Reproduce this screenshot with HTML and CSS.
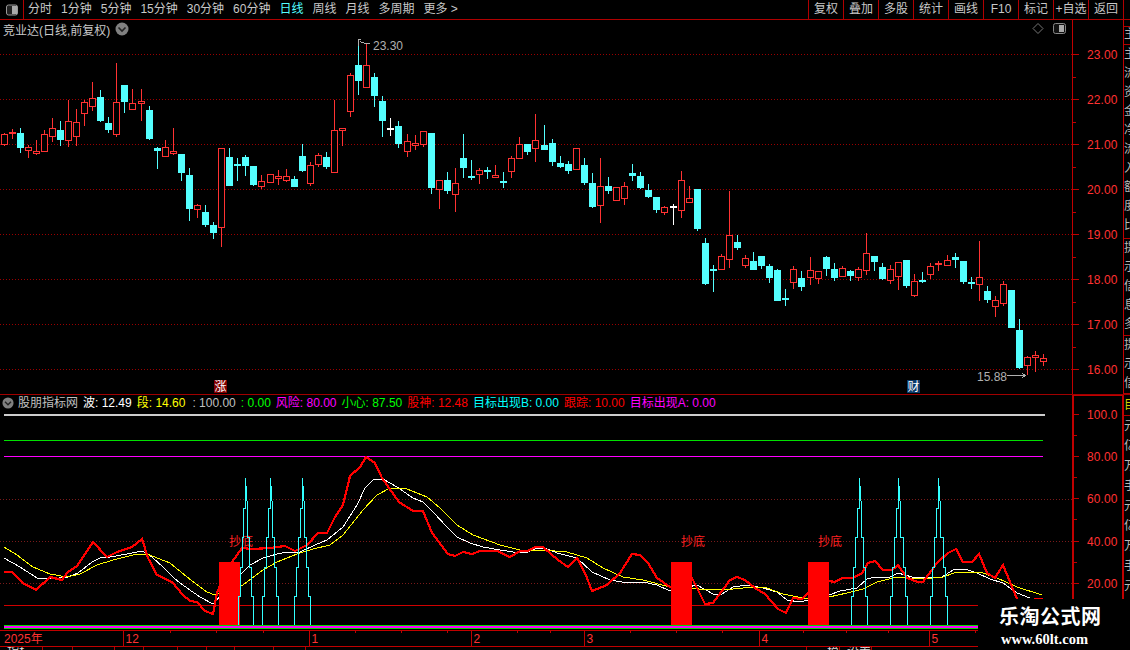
FILE: index.html
```html
<!DOCTYPE html>
<html lang="zh-CN">
<head>
    <meta charset="UTF-8">
    <title>竞业达 日线</title>
    <link rel="stylesheet" href="styles.css">
</head>
<body>
    <!-- Top toolbar -->
    <div class="toolbar">
        <div class="toggle-btn">
            <svg width="14" height="12" viewBox="0 0 14 12"><rect x="1.5" y="1" width="11" height="10" rx="2" fill="#222" stroke="#999"/><rect x="7" y="2" width="5" height="8" fill="#aaa"/></svg>
        </div>
        <div class="periods">
            <span>分时</span><span>1分钟</span><span>5分钟</span><span>15分钟</span><span>30分钟</span><span>60分钟</span>
            <span class="active">日线</span><span>周线</span><span>月线</span><span>多周期</span><span>更多 &gt;</span>
        </div>
        <div class="actions">
            <span>复权</span><span>叠加</span><span>多股</span><span>统计</span><span>画线</span><span>F10</span><span>标记</span><span>+自选</span><span>返回</span>
        </div>
    </div>

    <!-- K line chart -->
    <div class="chart-row kline-row">
        <div class="pane">
            <div class="pane-title">
                <span>竞业达(日线,前复权)</span>
                <svg class="chevron" width="14" height="14" viewBox="0 0 14 14"><circle cx="7" cy="7" r="6.5" fill="#808080"/><path d="M3.5 5.5 L7 9 L10.5 5.5" fill="none" stroke="#222" stroke-width="1.6"/></svg>
                <svg class="title-icons" width="38" height="14" viewBox="0 0 38 14"><path d="M6 1.5 L11 6.5 L6 11.5 L1 6.5 Z" fill="none" stroke="#777"/><rect x="21.5" y="1.5" width="12" height="10" rx="2" fill="#111" stroke="#888"/><rect x="27" y="3" width="5" height="7" fill="#aaa"/></svg>
            </div>
            <svg id="klineChart" class="plot" width="1072" height="356" viewBox="0 38 1072 356"></svg>
        </div>
        <svg id="priceAxis" class="axis" width="50" height="374" viewBox="1073 20 50 374"></svg>
        <div class="side-strip">
            <div class="side-cell cell-a"></div>
            <div class="side-cell cell-b">主</div>
            <div class="side-cell cell-c">主<br>流<br>资<br>金<br>净<br>流<br>入<br>额<br>度<br>比</div>
            <div class="side-cell cell-d">提<br>示<br>信<br>息<br>多</div>
            <div class="side-cell cell-e">提<br>示<br>信</div>
        </div>
    </div>

    <!-- Indicator panel -->
    <div class="chart-row ind-row">
        <div class="pane">
            <div class="ind-legend">
                <svg class="chevron" width="12" height="12" viewBox="0 0 14 14"><circle cx="7" cy="7" r="6.5" fill="#808080"/><path d="M3.5 5.5 L7 9 L10.5 5.5" fill="none" stroke="#222" stroke-width="1.6"/></svg>
                <span class="grey">股朋指标网</span>
                <span class="white">波: 12.49</span>
                <span class="yellow">段: 14.60</span>
                <span class="grey wide">: 100.00</span>
                <span class="green">: 0.00</span>
                <span class="magenta">风险: 80.00</span>
                <span class="green">小心: 87.50</span>
                <span class="red">股神: 12.48</span>
                <span class="cyan">目标出现B: 0.00</span>
                <span class="red">跟踪: 10.00</span>
                <span class="magenta">目标出现A: 0.00</span>
            </div>
            <svg id="indChart" class="plot" width="1072" height="219" viewBox="0 411 1072 219"></svg>
        </div>
        <svg id="indAxis" class="axis" width="48" height="234" viewBox="1074 396 48 234"></svg>
        <div class="side-strip">
            <div class="side-cell cell-f">目</div>
            <div class="side-cell cell-g">元<br>亿<br>万<br>手<br>元<br>亿<br>万<br>手<br>元<br>亿</div>
        </div>
    </div>

    <!-- Date axis -->
    <svg id="dateAxis" class="date-axis" width="1130" height="17" viewBox="0 630 1130 17"></svg>

    <!-- Bottom tabs, nearly cut off by the window -->
    <div class="tabs">
        <span class="tab w43">指标</span><span class="tab w30"></span><span class="tab w42"></span><span class="tab w29"></span>
        <span class="tab w34"></span><span class="tab w29"></span><span class="tab w28"></span><span class="tab w39"></span>
        <span class="tab w32"></span><span class="tab w501"></span><span class="tab w33">模</span><span class="tab w32">设置</span>
    </div>

    <!-- Site watermark -->
    <div class="watermark">
        <div class="wm-name">乐淘公式网</div>
        <div class="wm-url">www.60lt.com</div>
    </div>

    <script src="app.js"></script>
</body>
</html>
```

FILE: styles.css
```css
* {
    margin: 0;
    padding: 0;
    box-sizing: border-box;
}

body {
    position: relative;
    width: 1130px;
    height: 650px;
    overflow: hidden;
    background-color: #000;
    color: #c8c8c8;
    font-family: "Liberation Sans", "Noto Sans CJK SC", sans-serif;
    font-size: 12px;
}

svg {
    display: block;
}

/* Toolbar */
.toolbar {
    display: flex;
    height: 20px;
    border-bottom: 1px solid #b00000;
    line-height: 19px;
}

.toggle-btn {
    display: flex;
    align-items: center;
    justify-content: center;
    width: 24px;
    border-right: 1px solid #b00000;
}

.periods {
    display: flex;
    gap: 9px;
    padding-left: 4px;
}

.periods .active {
    color: #54ffff;
}

.actions {
    display: flex;
    margin-left: auto;
    margin-right: 6px;
    border-right: 1px solid #b00000;
}

.actions span {
    width: 35px;
    border-left: 1px solid #b00000;
    text-align: center;
}

/* Chart rows */
.chart-row {
    display: flex;
}

.kline-row {
    height: 375px;
    border-bottom: 1px solid #a00000;
}

.ind-row {
    height: 235px;
}

.pane {
    width: 1072px;
}

.pane-title {
    display: flex;
    align-items: center;
    height: 18px;
    padding-left: 3px;
}

.pane-title .chevron {
    margin-left: 5px;
}

.title-icons {
    margin-left: auto;
    margin-right: 2px;
}

.axis {
    border-right: 1px solid #c00000;
}

.kline-row .axis {
    width: 52px;
    border-left: 1px solid #c00000;
}

.ind-row .axis {
    width: 52px;
    border-left: 2px solid #c00000;
    border-right: 2px solid #c00000;
    border-top: 1px solid #c00000;
}

.side-strip {
    width: 6px;
    overflow: hidden;
    line-height: 14px;
    color: #b8b8b8;
}

.side-cell {
    width: 14px;
    overflow: hidden;
    border-bottom: 1px solid #b00000;
}

.cell-a { height: 7px; }
.cell-b { height: 18px; }
.cell-c { height: 194px; line-height: 19px; }
.cell-d { height: 97px; line-height: 19px; }
.cell-e { height: 58px; line-height: 19px; }
.cell-f { height: 21px; padding-top: 3px; color: #d0d000; }
.cell-g { height: 214px; line-height: 20px; border-bottom: none; }

.ind-legend {
    display: flex;
    align-items: center;
    gap: 5px;
    height: 16px;
    padding-left: 2px;
    white-space: nowrap;
}

.ind-legend span {
    line-height: 16px;
}

.ind-legend .chevron {
    margin-right: -1px;
}

.ind-legend .wide {
    margin-left: 2px;
}

.grey { color: #c0c0c0; }
.white { color: #fff; }
.yellow { color: #ffff00; }
.green { color: #00ff00; }
.magenta { color: #ff00ff; }
.red { color: #ff0000; }
.cyan { color: #00ffff; }

/* SVG pieces */
.grid {
    stroke: #9a0000;
    stroke-dasharray: 1 2;
    shape-rendering: crispEdges;
}

.grid-dim {
    stroke: #7a1a1a;
}

.candle {
    shape-rendering: crispEdges;
}

.price-label {
    fill: #ff3232;
    font-size: 12px;
    letter-spacing: 0.1px;
}

.tick {
    stroke: #c00000;
    shape-rendering: crispEdges;
}

.note {
    fill: #b0b0b0;
    font-size: 12px;
}

.note-line {
    fill: none;
    stroke: #b0b0b0;
    shape-rendering: crispEdges;
}

.badge-text {
    fill: #fff;
    font-size: 12px;
    text-anchor: middle;
}

.signal-text {
    fill: #ff2020;
    font-size: 12px;
}

.curve {
    fill: none;
    shape-rendering: crispEdges;
}

.date-label {
    fill: #ff3232;
    font-size: 12px;
}

.tabs {
    display: flex;
    height: 3px;
    overflow: hidden;
    line-height: 11px;
    color: #ddd;
}

.tab {
    flex: none;
    height: 3px;
    overflow: visible;
    border-right: 1px solid #b00000;
    padding-left: 7px;
}

.w43 { width: 43px; }
.w30 { width: 30px; }
.w42 { width: 42px; }
.w29 { width: 29px; }
.w34 { width: 34px; }
.w28 { width: 28px; }
.w39 { width: 39px; }
.w32 { width: 32px; }
.w33 { width: 33px; padding-left: 20px; }
.w501 { width: 501px; }

.watermark {
    position: absolute;
    right: 0;
    bottom: 0;
    width: 152px;
    height: 51px;
    padding: 6px 0 0 21px;
    background-color: #000;
    color: #fff;
}

.wm-name {
    font-size: 20px;
    font-weight: bold;
    line-height: 24px;
    letter-spacing: 0.5px;
    white-space: nowrap;
}

.wm-url {
    margin-top: 2px;
    margin-left: 2px;
    font-family: "Liberation Serif", serif;
    font-size: 14.5px;
    font-weight: bold;
    line-height: 16px;
}
```

FILE: app.js
```js
// Candles were read off at 3x, so values are 1/3 px from a row origin.
// Each row is [type, high, bodyTop, bodyBottom, low].
const candleGroups = [
    { from: 60, rows: [
        ['r',219,223,254,257],['r',207,217,223,237],['c',204,219,264,279],['r',255,262,272,294],
        ['r',240,274,281,285],['r',210,223,275,275],['r',174,205,230,246],['c',183,210,240,258],
        ['r',120,184,242,261],['r',148,187,230,258],['r',120,127,161,198],['r',66,115,140,153],
        ['c',90,111,183,186],['c',171,189,210,219],['r',9,127,224,231],['c',75,75,126,159],
        ['r',87,130,149,149],['r',87,124,131,183],['c',138,150,237,240],['c',262,264,273,327],
        ['r',240,262,290,290],['r',204,274,281,285],['c',282,282,339,363],['c',324,345,447,483],
        ['r',432,436,449,474],['c',435,456,495,501],['c',486,495,519,537],['r',265,265,503,561],
        ['c',264,291,378,378],['c',294,312,318,363],['c',285,291,318,348],['c',318,318,375,378],
        ['r',345,364,381,387],['r',343,343,368,368],['r',330,349,356,375]
    ]},
    { from: 30, rows: [
        ['r',418,439,453,456],['c',438,447,471,471],['c',342,378,423,426],['r',396,406,461,468],
        ['r',370,376,404,411],['c',366,381,411,417],['r',210,301,428,428],['r',295,295,302,348],
        ['r',130,136,245,261],['c',38,105,153,195],['r',42,106,173,173],['c',129,141,198,231],
        ['c',198,213,273,321],['w',264,294,297,318],['c',273,288,342,354],['r',312,334,365,381],
        ['r',315,340,347,360],['r',304,304,344,351],['c',309,309,474,492],['r',451,451,479,537],
        ['c',426,450,483,492],['r',414,460,494,546],['c',312,384,414,444],['c',390,438,444,450],
        ['r',414,421,434,462],['c',411,419,422,447],['r',405,436,443,444],['c',426,453,459,474],
        ['r',378,385,425,444],['r',321,343,386,387],['c',342,342,366,375],['r',252,331,356,396],
        ['c',285,345,360,360],['c',327,339,396,408]
    ]},
    { from: 130, rows: [
        ['c',78,99,111,114],['c',93,102,123,132],['r',54,54,119,119],['c',84,105,159,165],
        ['c',129,159,231,234],['r',84,169,227,279],['c',141,168,183,192],['r',172,172,212,212],
        ['r',156,169,206,225],['c',102,129,138,153],['c',126,138,174,177],['c',162,180,201,204],
        ['c',201,201,240,249],['r',228,232,250,255],['w',222,228,234,285],['r',123,151,242,264],
        ['r',168,205,218,218],['c',177,177,297,303],['c',324,339,462,465],['c',405,417,420,486],
        ['r',372,379,419,419],['r',183,316,389,414],['c',315,336,354,360],['r',375,385,407,414],
        ['c',366,393,420,420],['c',378,378,408,417],['c',402,408,444,459],['c',417,420,513,513],
        ['c',477,504,510,528],['r',408,418,458,477],['c',423,444,471,483],['r',381,421,443,465],
        ['r',424,424,446,462],['c',378,381,417,438],['c',399,417,444,453]
    ]},
    { from: 220, rows: [
        ['r',138,145,170,171],['c',150,153,168,183],['r',142,148,174,183],['r',39,100,152,165],
        ['c',108,108,126,153],['c',129,141,177,180],['r',135,148,182,192],['r',127,127,170,210],
        ['c',120,120,198,204],['r',162,183,228,231],['c',156,180,186,189],['r',129,139,164,177],
        ['r',123,130,136,153],['r',105,121,137,138],['c',99,111,120,144],['c',123,123,186,192],
        ['c',171,186,192,207],['r',63,171,194,243],['c',198,213,240,249],['r',228,241,260,291],
        ['r',183,193,251,258],['c',210,210,324,324],['c',297,330,444,447],['r',408,412,437,465],
        ['r',393,406,413,456],['r',402,415,425,438]
    ]}
];

const redLine = '4,572 12,572 23,583 36,590 50,577 62,580 68,572 77,566 93,542 107,557 117,552 132,547 142,539 148,558 157,575 172,582 183,595 190,601 197,602 205,611 213,614 217,593 226,570 232,562 242,548 252,549 270,548 285,546 295,551 307,545 318,533 327,533 335,517 343,505 350,476 360,467 366,457 375,463 382,478 399,502 413,511 423,511 432,533 448,554 455,556 463,552 472,554 480,551 497,551 510,557 520,551 528,551 535,547 543,547 558,560 568,567 577,558 585,573 592,591 607,585 620,573 632,554 640,555 648,563 657,578 670,587 692,578 705,604 713,603 730,580 737,577 745,580 755,588 765,594 778,609 786,613 793,598 802,599 808,593 829,581 835,582 842,578 853,578 862,573 868,563 875,561 883,570 892,570 898,565 907,578 918,582 923,582 937,563 948,553 956,549 963,562 972,562 979,554 987,573 995,578 1003,565 1017,599 1025,604 1035,599 1043,599';
const whiteLine = '4,558 20,567 37,578 50,579 68,577 78,573 92,562 102,557 110,557 127,554 142,551 152,557 163,567 175,579 187,588 200,597 213,604 240,575 250,565 263,558 277,554 288,552 300,552 315,545 327,540 343,527 357,505 365,488 373,480 383,479 397,487 413,498 423,502 433,512 447,527 457,537 470,543 483,547 500,550 513,552 528,552 537,548 545,548 557,553 577,558 592,572 610,580 622,582 643,582 657,585 670,591 697,585 713,594 722,594 733,587 747,585 763,588 777,592 787,600 800,602 808,600 829,595 840,591 857,588 867,579 875,577 890,577 898,573 912,577 930,578 942,577 953,570 965,569 977,573 990,579 1003,583 1017,593 1030,598';
const yellowLine = '4,547 17,555 33,567 50,574 67,577 80,574 97,565 113,560 133,555 147,554 170,563 187,577 207,592 215,595 240,587 263,570 277,562 297,554 313,549 330,545 343,535 363,510 377,495 390,488 407,489 427,497 440,508 457,525 473,535 500,545 520,550 543,550 567,552 587,558 603,568 623,577 643,580 670,587 713,590 733,589 753,587 767,588 783,594 808,599 829,597 847,593 863,589 877,582 897,577 923,579 943,577 957,572 980,572 997,578 1017,587 1042,595';

const svgNS = 'http://www.w3.org/2000/svg';

function add(parent, tag, attrs, text) {
    const el = document.createElementNS(svgNS, tag);
    for (const key in attrs) {
        el.setAttribute(key, attrs[key]);
    }
    if (text) {
        el.textContent = text;
    }
    parent.appendChild(el);
    return el;
}

function drawCandles(svg) {
    const group = add(svg, 'g', { class: 'candle' });
    let i = 0;
    candleGroups.forEach(function(block) {
        block.rows.forEach(function(row) {
            const x = Math.floor(4.03 + 8.06 * i);
            const high = Math.round(block.from + row[1] / 3);
            const top = Math.round(block.from + row[2] / 3);
            const bottom = Math.round(block.from + row[3] / 3);
            const low = Math.round(block.from + row[4] / 3);
            const color = row[0] === 'r' ? '#ff3232' : row[0] === 'c' ? '#54ffff' : '#ffffff';

            add(group, 'rect', { x: x, y: high, width: 1, height: Math.max(low - high, 1), fill: color });
            if (row[0] === 'r') {
                add(group, 'rect', { x: x - 2.5, y: top + 0.5, width: 6, height: Math.max(bottom - top - 1, 1), fill: '#000', stroke: color });
            } else {
                add(group, 'rect', { x: x - 3, y: top, width: 7, height: Math.max(bottom - top, 2), fill: color });
            }
            i++;
        });
    });
}

function drawKline() {
    const svg = document.getElementById('klineChart');
    for (let k = 0; k < 8; k++) {
        const y = 54.5 + 45 * k;
        add(svg, 'line', { class: 'grid', x1: 0, y1: y, x2: 1072, y2: y });
    }
    drawCandles(svg);

    // High and low notes
    add(svg, 'path', { class: 'note-line', d: 'M358.5 46 V39.5 H361 M360 41.5 L365 43.5 H370' });
    add(svg, 'text', { class: 'note', x: 373, y: 50 }, '23.30');
    add(svg, 'text', { class: 'note', x: 977, y: 381 }, '15.88');
    add(svg, 'path', { class: 'note-line', d: 'M1007 375.5 H1025 M1022 373 L1025 375.5 L1022 378' });

    // Event badges
    add(svg, 'rect', { x: 214, y: 380, width: 13, height: 13, fill: '#800000' });
    add(svg, 'text', { class: 'badge-text', x: 220.5, y: 391 }, '涨');
    add(svg, 'rect', { x: 907, y: 380, width: 13, height: 13, fill: '#0a3a6a' });
    add(svg, 'text', { class: 'badge-text', x: 913.5, y: 391 }, '财');
}

function drawPriceAxis() {
    const svg = document.getElementById('priceAxis');
    for (let k = 0; k < 8; k++) {
        const y = 54.5 + 45 * k;
        add(svg, 'line', { class: 'tick', x1: 1073, y1: y, x2: 1079, y2: y });
        if (k < 7) {
            add(svg, 'line', { class: 'tick', x1: 1073, y1: y + 22.5, x2: 1076, y2: y + 22.5 });
        }
        add(svg, 'text', { class: 'price-label', x: 1087, y: y + 4.5 }, (23 - k).toFixed(2));
    }
}

function spike(left, right, top) {
    // Staircase up one side and down the other, as the terminal draws it.
    // Both sides meet at the middle on the top step.
    const mid = Math.floor((left + right) / 2);
    const steps = 5;
    const floor = 626;
    const points = [];
    for (let k = 0; k < steps; k++) {
        const x = Math.round(left + (mid - left) * k / (steps - 1)) + 0.5;
        points.push(x + ',' + Math.round(floor - (floor - top) * k / steps));
        points.push(x + ',' + Math.round(floor - (floor - top) * (k + 1) / steps));
    }
    for (let k = steps - 2; k >= 0; k--) {
        const x = Math.round(right - (right - mid) * k / (steps - 1)) + 0.5;
        points.push(x + ',' + Math.round(floor - (floor - top) * (k + 1) / steps));
        points.push(x + ',' + Math.round(floor - (floor - top) * k / steps));
    }
    return points.join(' ');
}

function drawIndicator() {
    const svg = document.getElementById('indChart');

    [499, 541.5, 583.5].forEach(function(y) {
        add(svg, 'line', { class: 'grid grid-dim', x1: 0, y1: y, x2: 1072, y2: y });
    });

    add(svg, 'rect', { x: 4, y: 414, width: 1041, height: 2, fill: '#cccccc' });
    add(svg, 'rect', { x: 4, y: 440, width: 1039, height: 1, fill: '#00e000' });
    add(svg, 'rect', { x: 4, y: 456, width: 1039, height: 1, fill: '#ff00ff' });
    add(svg, 'rect', { x: 4, y: 605, width: 974, height: 1, fill: '#d00000' });

    add(svg, 'polyline', { class: 'curve', points: whiteLine, stroke: '#ffffff', 'stroke-width': 1 });
    add(svg, 'polyline', { class: 'curve', points: yellowLine, stroke: '#ffff00', 'stroke-width': 1 });
    add(svg, 'polyline', { class: 'curve', points: redLine, stroke: '#ff0000', 'stroke-width': 2.2 });

    [219, 671, 808].forEach(function(x) {
        add(svg, 'rect', { x: x, y: 562, width: 21, height: 64, fill: '#ff0000' });
    });
    [229, 681, 818].forEach(function(x) {
        add(svg, 'text', { class: 'signal-text', x: x, y: 546 }, '抄底');
    });

    [[238, 253], [262, 278], [294, 310], [851, 867], [890, 907], [930, 947]].forEach(function(s) {
        add(svg, 'polyline', { class: 'curve', points: spike(s[0], s[1], 478), stroke: '#33ffff', 'stroke-width': 1 });
    });

    add(svg, 'rect', { x: 4, y: 625, width: 974, height: 4, fill: '#00e000' });
    add(svg, 'rect', { x: 4, y: 626, width: 974, height: 2, fill: '#ff00ff' });
}

function drawIndAxis() {
    const svg = document.getElementById('indAxis');
    const labels = ['100.0', '80.00', '60.00', '40.00', '20.00'];
    labels.forEach(function(label, k) {
        const y = 414.5 + 42.4 * k;
        add(svg, 'line', { class: 'tick', x1: 1074, y1: y, x2: 1079, y2: y });
        add(svg, 'line', { class: 'tick', x1: 1074, y1: y + 21.2, x2: 1077, y2: y + 21.2 });
        add(svg, 'text', { class: 'price-label', x: 1087, y: y + 4.5 }, label);
    });
}

function drawDateAxis() {
    const svg = document.getElementById('dateAxis');
    add(svg, 'line', { class: 'tick', x1: 0, y1: 630.5, x2: 1130, y2: 630.5 });
    add(svg, 'line', { class: 'tick', x1: 0, y1: 646.5, x2: 1130, y2: 646.5 });

    [[123, '12'], [309, '1'], [471, '2'], [584, '3'], [759, '4'], [929, '5']].forEach(function(m) {
        add(svg, 'line', { class: 'tick', x1: m[0] + 0.5, y1: 630, x2: m[0] + 0.5, y2: 646 });
        add(svg, 'text', { class: 'date-label', x: m[0] + 2.5, y: 643 }, m[1]);
    });
    add(svg, 'text', { class: 'date-label', x: 4, y: 643 }, '2025年');

    [170, 216, 263, 355, 401, 447, 517, 550, 630, 676, 722, 803, 846, 888, 975].forEach(function(x) {
        add(svg, 'line', { class: 'tick', x1: x + 0.5, y1: 630, x2: x + 0.5, y2: 633 });
    });
}

drawKline();
drawPriceAxis();
drawIndicator();
drawIndAxis();
drawDateAxis();
```
